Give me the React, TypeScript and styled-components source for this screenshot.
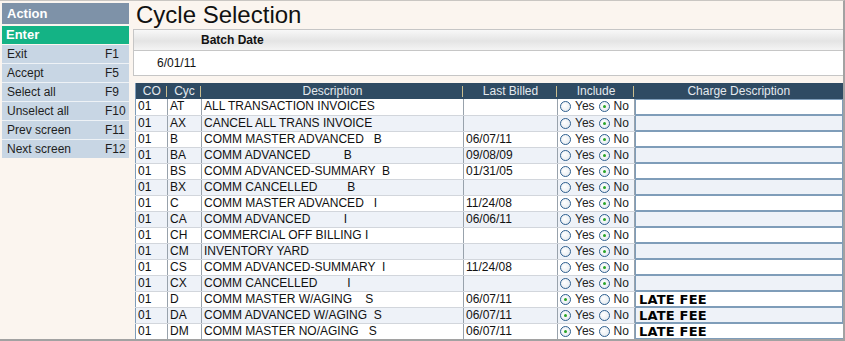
import styled, { createGlobalStyle } from "styled-components";

const GlobalStyle = createGlobalStyle`
  body {
    margin: 0;
    background: #fbf5ef;
    font-family: "Liberation Sans", Arial, sans-serif;
  }
`;

const Page = styled.div`
  width: 845px;
  height: 341px;
  box-sizing: border-box;
  border-top: 1px solid #c9c6c2;
  border-right: 2px solid #a2a2a2;
  border-bottom: 2px solid #a2a2a2;
  background: #fbf5ef;
  padding-left: 2px;
  display: grid;
  grid-template-columns: 127px 1fr;
  column-gap: 4px;
  overflow: hidden;
`;

const Sidebar = styled.div`
  display: flex;
  flex-direction: column;
  padding-top: 2px;
`;

const ActionHeader = styled.div`
  height: 21px;
  line-height: 21px;
  background: #7e92a8;
  color: #fff;
  font-weight: bold;
  font-size: 13px;
  padding-left: 5px;
`;

const EnterRow = styled.div`
  margin-top: 2px;
  height: 18px;
  line-height: 18px;
  background: #14b385;
  color: #fff;
  font-weight: bold;
  font-size: 13px;
  padding-left: 4px;
`;

const MenuList = styled.div`
  margin-top: 1px;
  display: flex;
  flex-direction: column;
  gap: 1px;
  background: #eef2f6;
`;

const MenuItem = styled.div`
  height: 18px;
  line-height: 18px;
  background: #c8d6e4;
  color: #1e1e1e;
  font-size: 12px;
  padding-left: 5px;
  display: flex;
`;

const MenuLabel = styled.span`
  flex: 1;
`;

const MenuKey = styled.span`
  width: 24px;
`;

const Main = styled.div`
  display: flex;
  flex-direction: column;
`;

const Title = styled.h1`
  margin: 0;
  height: 28px;
  line-height: 28px;
  font-size: 24px;
  font-weight: normal;
  color: #111;
  padding-left: 3px;
`;

const BatchPanel = styled.div`
  border: 1px solid #c6c6c6;
  background: #fff;
`;

const BatchHeader = styled.div`
  height: 20px;
  line-height: 20px;
  background: linear-gradient(#f8f8f8, #e4e4e4 55%, #f4f4f4);
  border-bottom: 1px solid #c6c6c6;
  font-size: 12px;
  font-weight: bold;
  color: #111;
  padding-left: 67px;
`;

const BatchValue = styled.div`
  height: 24px;
  line-height: 24px;
  font-size: 12px;
  color: #111;
  padding-left: 23px;
`;

const Grid = styled.table`
  margin: 7px 0 0 2px;
  width: 708px;
  border-collapse: collapse;
  table-layout: fixed;
  font-size: 12px;
  color: #111;
  border-left: 1px solid #7f9db9;
`;

const HeadCell = styled.th<{ $sep?: boolean }>`
  position: relative;
  height: 16px;
  padding: 0;
  background: #2f4b63;
  color: #e4e9ee;
  font-weight: normal;
  text-align: center;
  line-height: 16px;

  &::after {
    content: "";
    display: ${(p) => (p.$sep ? "block" : "none")};
    position: absolute;
    right: 1px;
    top: 3px;
    width: 1px;
    height: 11px;
    background: #cbbd8e;
  }
`;

const Row = styled.tr<{ $alt: boolean }>`
  background: ${(p) => (p.$alt ? "#eef2f8" : "#fff")};
`;

const Cell = styled.td<{ $pre?: boolean }>`
  height: 15px;
  padding: 0 0 0 2px;
  line-height: 15px;
  border-bottom: 1px solid #d2d6dc;
  border-right: 1px solid #98a2ac;
  white-space: ${(p) => (p.$pre ? "pre" : "nowrap")};
  overflow: hidden;
`;

const InputCell = styled.td`
  padding: 0;
  height: 16px;
`;

const Radios = styled.div`
  display: flex;
  align-items: center;
  gap: 4px;
  height: 15px;
`;

const RadioOption = styled.label`
  display: flex;
  align-items: center;
  gap: 4px;
  color: #222;
`;

const RadioDot = styled.span<{ $on: boolean }>`
  width: 9px;
  height: 9px;
  border-radius: 50%;
  border: 1px solid #2e5f8f;
  background: radial-gradient(circle at 40% 40%, #fff, #dfe6ec);
  display: flex;
  align-items: center;
  justify-content: center;

  &::after {
    content: "";
    display: ${(p) => (p.$on ? "block" : "none")};
    width: 3px;
    height: 3px;
    border-radius: 50%;
    background: #27a427;
  }
`;

const ChargeInput = styled.input<{ $alt: boolean }>`
  display: block;
  width: 100%;
  height: 16px;
  box-sizing: border-box;
  margin: 0;
  padding: 0 0 0 3px;
  border: 1px solid #7f9db9;
  background: ${(p) => (p.$alt ? "#eef2f8" : "#fff")};
  font-family: "DejaVu Sans", sans-serif;
  font-weight: bold;
  font-size: 13px;
  letter-spacing: 0.2px;
  color: #000;
  outline: none;
`;

const menu = [
  ["Exit", "F1"],
  ["Accept", "F5"],
  ["Select all", "F9"],
  ["Unselect all", "F10"],
  ["Prev screen", "F11"],
  ["Next screen", "F12"],
];

type Cycle = {
  cyc: string;
  desc: string;
  billed: string;
  include?: boolean;
  charge?: string;
};

const cycles: Cycle[] = [
  { cyc: "AT", desc: "ALL TRANSACTION INVOICES", billed: "" },
  { cyc: "AX", desc: "CANCEL ALL TRANS INVOICE", billed: "" },
  { cyc: "B", desc: "COMM MASTER ADVANCED   B", billed: "06/07/11" },
  { cyc: "BA", desc: "COMM ADVANCED          B", billed: "09/08/09" },
  { cyc: "BS", desc: "COMM ADVANCED-SUMMARY  B", billed: "01/31/05" },
  { cyc: "BX", desc: "COMM CANCELLED         B", billed: "" },
  { cyc: "C", desc: "COMM MASTER ADVANCED   I", billed: "11/24/08" },
  { cyc: "CA", desc: "COMM ADVANCED          I", billed: "06/06/11" },
  { cyc: "CH", desc: "COMMERCIAL OFF BILLING I", billed: "" },
  { cyc: "CM", desc: "INVENTORY YARD", billed: "" },
  { cyc: "CS", desc: "COMM ADVANCED-SUMMARY  I", billed: "11/24/08" },
  { cyc: "CX", desc: "COMM CANCELLED         I", billed: "" },
  { cyc: "D", desc: "COMM MASTER W/AGING    S", billed: "06/07/11", include: true, charge: "LATE FEE" },
  { cyc: "DA", desc: "COMM ADVANCED W/AGING  S", billed: "06/07/11", include: true, charge: "LATE FEE" },
  { cyc: "DM", desc: "COMM MASTER NO/AGING   S", billed: "06/07/11", include: true, charge: "LATE FEE" },
];

const App = () => {
  return (
    <>
      <GlobalStyle />
      <Page>
        <Sidebar>
          <ActionHeader>Action</ActionHeader>
          <EnterRow>Enter</EnterRow>
          <MenuList>
            {menu.map(([label, key]) => (
              <MenuItem key={key}>
                <MenuLabel>{label}</MenuLabel>
                <MenuKey>{key}</MenuKey>
              </MenuItem>
            ))}
          </MenuList>
        </Sidebar>
        <Main>
          <Title>Cycle Selection</Title>
          <BatchPanel>
            <BatchHeader>Batch Date</BatchHeader>
            <BatchValue>6/01/11</BatchValue>
          </BatchPanel>
          <Grid>
            <colgroup>
              <col style={{ width: 32 }} />
              <col style={{ width: 34 }} />
              <col style={{ width: 262 }} />
              <col style={{ width: 94 }} />
              <col style={{ width: 77 }} />
              <col style={{ width: 209 }} />
            </colgroup>
            <thead>
              <tr>
                <HeadCell $sep>CO</HeadCell>
                <HeadCell $sep>Cyc</HeadCell>
                <HeadCell $sep>Description</HeadCell>
                <HeadCell $sep>Last Billed</HeadCell>
                <HeadCell $sep>Include</HeadCell>
                <HeadCell>Charge Description</HeadCell>
              </tr>
            </thead>
            <tbody>
              {cycles.map((c, i) => (
                <Row key={c.cyc} $alt={i % 2 === 1}>
                  <Cell>01</Cell>
                  <Cell>{c.cyc}</Cell>
                  <Cell $pre>{c.desc}</Cell>
                  <Cell>{c.billed}</Cell>
                  <Cell>
                    <Radios>
                      <RadioOption>
                        <RadioDot $on={!!c.include} />
                        Yes
                      </RadioOption>
                      <RadioOption>
                        <RadioDot $on={!c.include} />
                        No
                      </RadioOption>
                    </Radios>
                  </Cell>
                  <InputCell>
                    <ChargeInput readOnly value={c.charge ?? ""} $alt={i % 2 === 1} />
                  </InputCell>
                </Row>
              ))}
            </tbody>
          </Grid>
        </Main>
      </Page>
    </>
  );
};

export default App;
